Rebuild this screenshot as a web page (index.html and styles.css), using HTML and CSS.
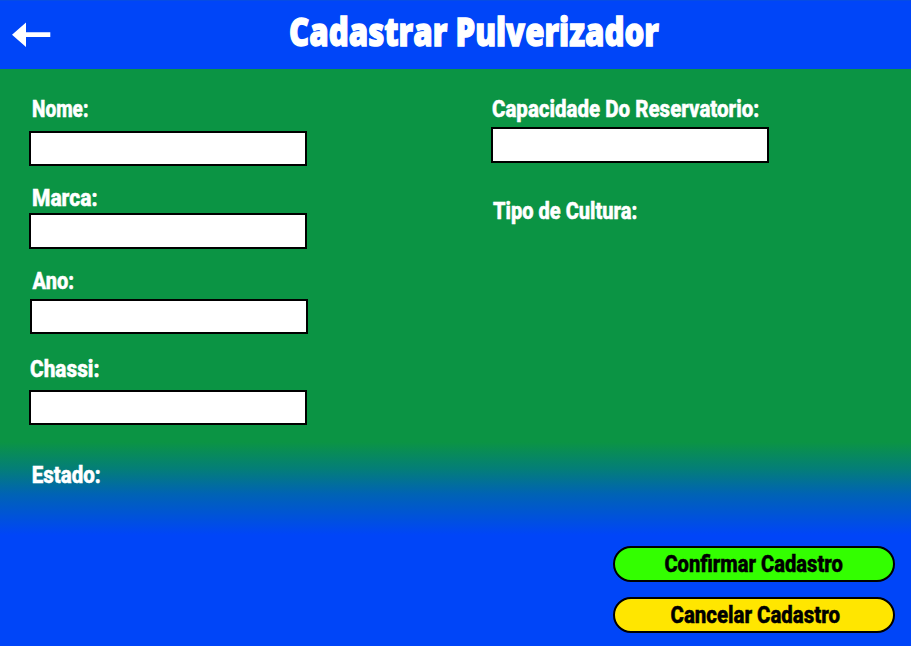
FILE: index.html
```html
<!DOCTYPE html>
<html lang="pt-BR">
<head>
<meta charset="utf-8">
<title>Cadastrar Pulverizador</title>
<link rel="stylesheet" href="styles.css">
</head>
<body>
<div class="screen">
  <header class="header">
    <a class="back" href="#" aria-label="Voltar">
      <svg width="40" height="26" viewBox="0 0 40 26"><path d="M0 12.7 14 .6V24.9ZM13.8 10.3H38.3V15H13.8Z" fill="#fff"/></svg>
    </a>
    <svg class="title" role="heading" aria-level="1"><text x="0" y="30" textLength="370" lengthAdjust="spacingAndGlyphs">Cadastrar Pulverizador</text></svg>
  </header>
  <form class="form">
    <div class="column">
      <label class="field nome"><svg class="label"><text x="3" y="18.4" textLength="56.5" lengthAdjust="spacingAndGlyphs">Nome:</text></svg><input type="text"></label>
      <label class="field marca"><svg class="label"><text x="3" y="18.5" textLength="65.5" lengthAdjust="spacingAndGlyphs">Marca:</text></svg><input type="text"></label>
      <label class="field ano"><svg class="label"><text x="3.6" y="18" textLength="41.4" lengthAdjust="spacingAndGlyphs">Ano:</text></svg><input type="text"></label>
      <label class="field chassi"><svg class="label"><text x="1" y="18.4" textLength="69.5" lengthAdjust="spacingAndGlyphs">Chassi:</text></svg><input type="text"></label>
      <div class="field estado"><svg class="label"><text x="2.7" y="18.6" textLength="69" lengthAdjust="spacingAndGlyphs">Estado:</text></svg></div>
    </div>
    <div class="column right">
      <label class="field capacidade"><svg class="label"><text x="1" y="18.3" textLength="267.3" lengthAdjust="spacingAndGlyphs">Capacidade Do Reservatorio:</text></svg><input type="text"></label>
      <div class="field cultura"><svg class="label"><text x="2" y="18.5" textLength="144.3" lengthAdjust="spacingAndGlyphs">Tipo de Cultura:</text></svg></div>
      <div class="actions">
        <button class="button confirm" type="button"><svg class="label"><text x="49.4" y="17.2" textLength="178.5" lengthAdjust="spacingAndGlyphs">Confirmar Cadastro</text></svg></button>
        <button class="button cancel" type="button"><svg class="label"><text x="55.5" y="17.2" textLength="169.5" lengthAdjust="spacingAndGlyphs">Cancelar Cadastro</text></svg></button>
      </div>
    </div>
  </form>
</div>
</body>
</html>
```
FILE: styles.css
```css
* { box-sizing: border-box; }

body { margin: 0; }

svg { display: block; overflow: visible; }

.screen {
  display: flex;
  flex-direction: column;
  width: 911px;
  height: 646px;
  overflow: hidden;
  background: #0045f8;
}

.header {
  display: flex;
  flex: none;
  height: 69px;
  padding: 15px 0 0 12px;
  border-top: 1px solid #064ce4;
}

.back { margin-top: 6px; width: 40px; height: 26px; }

.title {
  width: 370px;
  height: 40px;
  margin-left: 237px;
  fill: #fff;
  stroke: #fff;
  stroke-width: 1.3px;
  font: 800 38px "Open Sans", sans-serif;
}

.form {
  display: grid;
  grid-template-columns: 462px 1fr;
  flex: 1;
  padding: 30px 16px 0 29px;
  background: linear-gradient(#0b9444 0, #0b9444 373px, #047e78 400px, #0063b4 425px, #0045f8 466px);
}

.column { display: flex; flex-direction: column; align-items: flex-start; }

.field { display: flex; flex-direction: column; width: 278px; }

.label {
  width: 278px;
  height: 24px;
  fill: #fff;
  stroke: #fff;
  stroke-width: 0.5px;
  font: 800 24px Roboto, sans-serif;
}

.field input {
  width: 278px;
  height: 36px;
  padding: 0 8px;
  border: 2px solid #000;
  border-radius: 0;
  background: #fff;
  font: 18px Roboto, sans-serif;
  outline: 0;
}

.nome input { height: 35px; margin-top: 8px; }
.marca { margin-top: 21px; }
.marca input { margin-top: 2px; }
.ano { margin-top: 22px; }
.ano input { height: 35px; margin: 4px 0 0 1px; }
.chassi { margin-top: 25px; }
.chassi input { height: 35px; margin-top: 7px; }
.estado { margin-top: 39px; }

.capacidade input { margin-top: 4px; }
.cultura { margin-top: 37px; }

.actions {
  display: flex;
  flex-direction: column;
  gap: 15px;
  align-self: flex-end;
  margin-top: 322px;
}

.button {
  width: 282px;
  height: 36px;
  padding: 6px 0 0;
  border: 2px solid #000;
  border-radius: 18px;
  text-align: left;
}

.button .label { fill: #000; stroke: #000; }
.confirm { background: #3f0; }
.cancel { background: #ffe600; }
```
